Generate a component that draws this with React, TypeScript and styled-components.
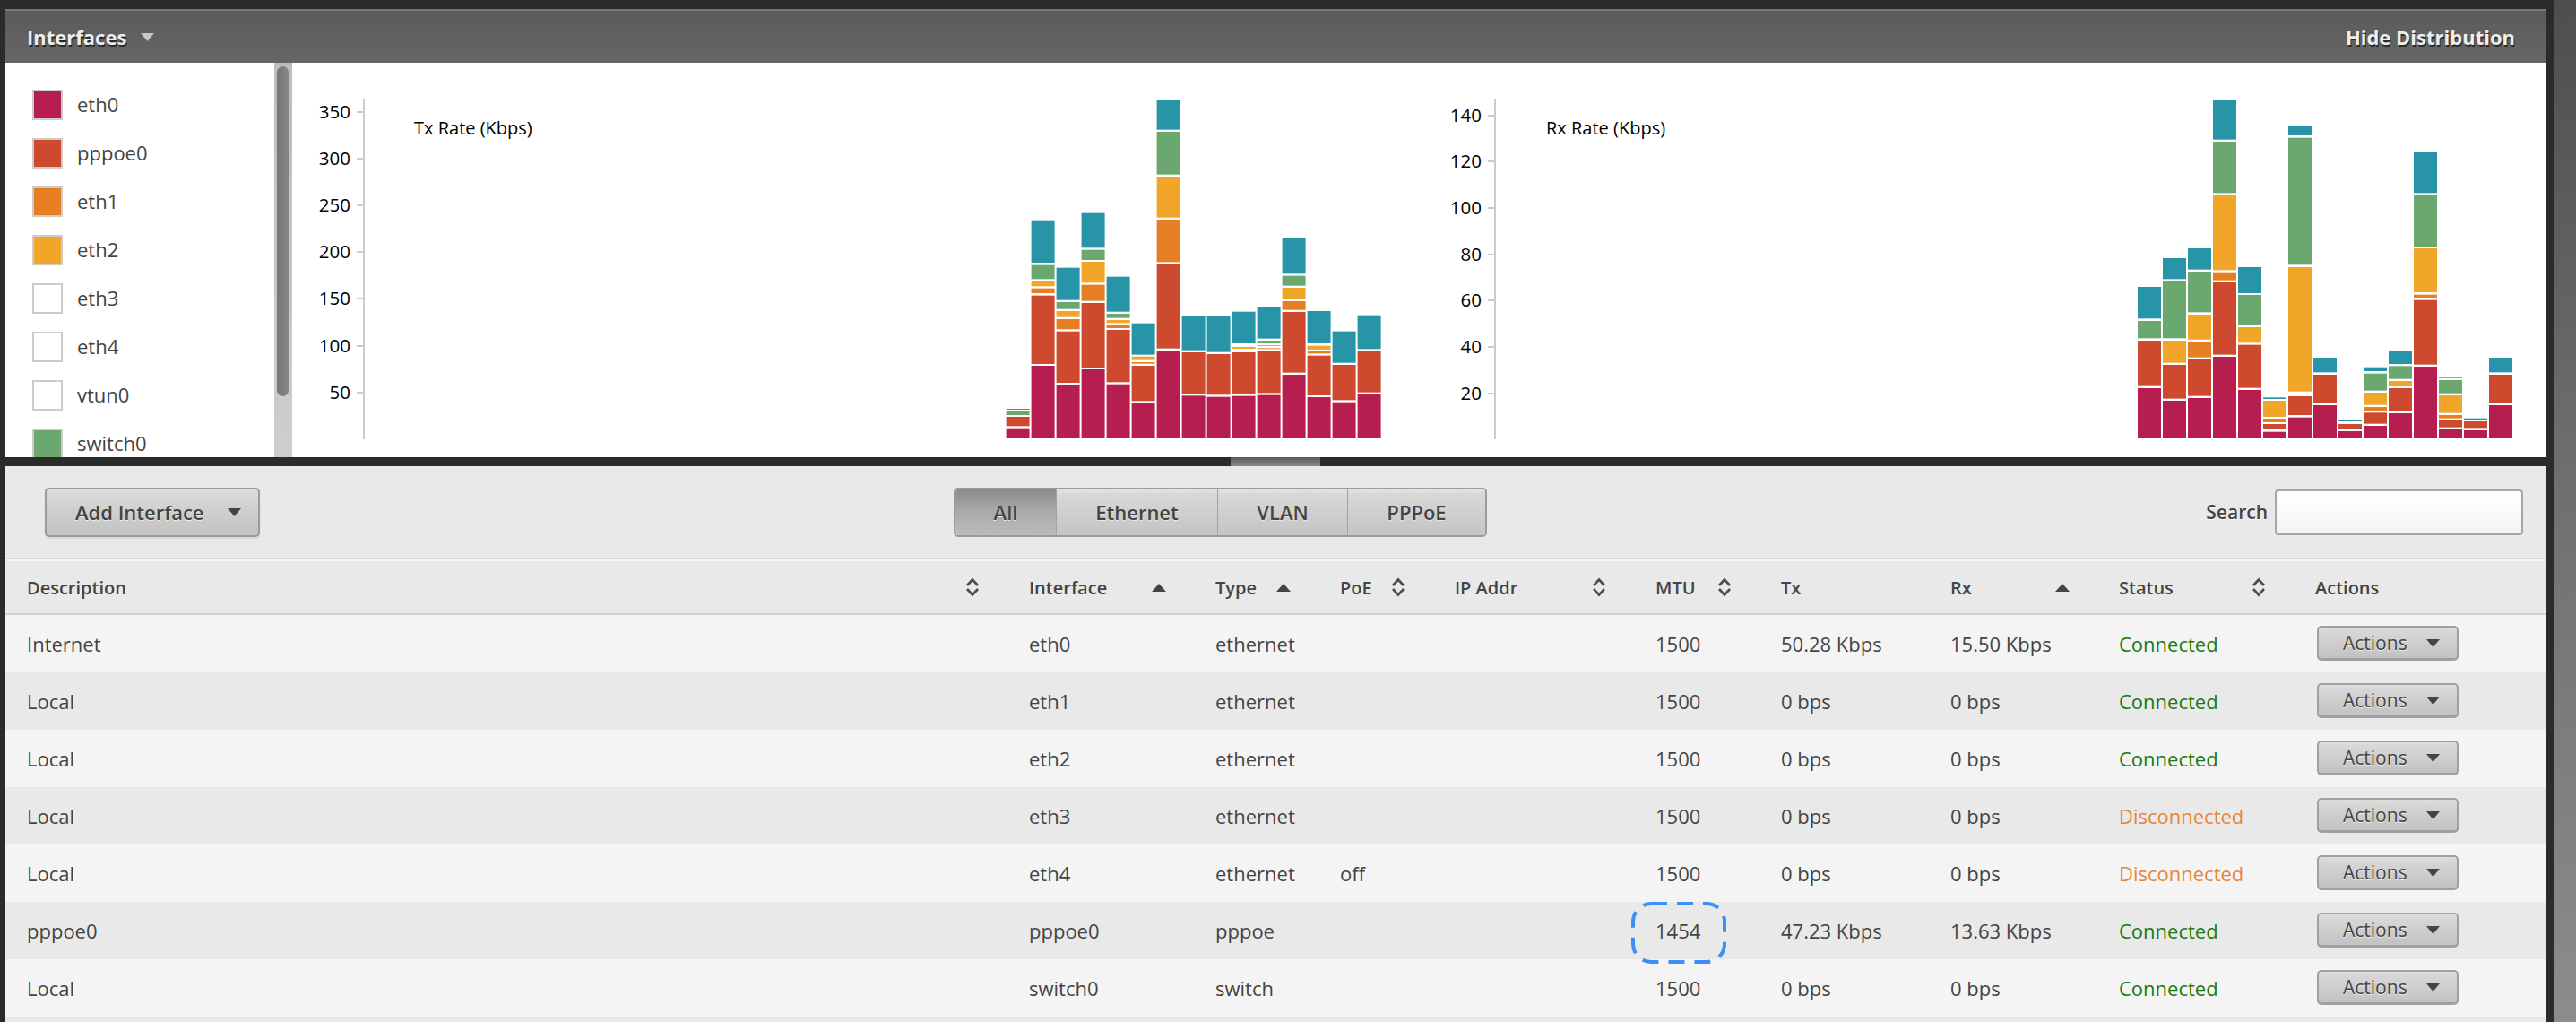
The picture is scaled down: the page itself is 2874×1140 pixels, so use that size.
import React from "react";
import styled, { createGlobalStyle } from "styled-components";

const GlobalStyle = createGlobalStyle`
  html, body { margin: 0; padding: 0; background: #2b2b2b; }
  body { font-family: "Open Sans", "Liberation Sans", sans-serif; }
  * { box-sizing: border-box; }
`;

const Page = styled.div`
  position: relative;
  display: flex;
  width: 2874px;
  height: 1140px;
  overflow: hidden;
  background: #2b2b2b;
`;
const Main = styled.div`
  flex: 1;
  min-width: 0;
  display: flex;
  flex-direction: column;
  gap: 10px;
  padding: 10px 10px 0 6px;
`;
const SideStrip = styled.div`
  width: 24px;
  background: linear-gradient(180deg, #4e4e4e 0%, #6e6e6e 45%, #8c8c8c 100%);
`;
const DistPanel = styled.section`
  height: 500px;
  flex: none;
  display: flex;
  flex-direction: column;
`;
const DistHeader = styled.header`
  height: 60px;
  flex: none;
  display: flex;
  align-items: center;
  justify-content: space-between;
  padding: 0 34px 0 24px;
  border-top: 2px solid #757575;
  background: linear-gradient(180deg, #5b5b5b, #666666);
  color: #eeeeee;
  font-size: 22px;
  font-weight: 700;
  text-shadow: 1px 2px 0 #2a2a2a;
`;
const HeaderTitle = styled.div`
  display: flex;
  align-items: center;
  gap: 16px;
`;
const DistBody = styled.div`
  flex: 1;
  min-height: 0;
  display: flex;
  background: #fff;
  overflow: hidden;
`;
const Legend = styled.div`
  width: 300px;
  flex: none;
  padding: 30px 0 0 30px;
  display: flex;
  flex-direction: column;
  gap: 20px;
  overflow: hidden;
`;
const LegendRow = styled.div`
  display: flex;
  align-items: center;
  gap: 16px;
  height: 34px;
  flex: none;
  color: #444;
  font-size: 22px;
`;
const LegendName = styled.span`
  margin-top: -3px;
`;
const Swatch = styled.span<{ $color?: string }>`
  width: 34px;
  height: 34px;
  border: 2px solid #cccccc;
  background: ${(p) => p.$color ?? "#fff"};
`;
const ScrollTrack = styled.div`
  width: 20px;
  flex: none;
  padding: 4px 4px 0 3px;
  background: linear-gradient(180deg, #bdbdbd, #cecece);
`;
const ScrollThumb = styled.div`
  height: 368px;
  border-radius: 7px;
  background: linear-gradient(90deg, #777, #868686);
`;
const Charts = styled.div`
  flex: 1;
  min-width: 0;
  display: flex;
`;
const ChartSvg = styled.svg<{ $w: number }>`
  display: block;
  width: ${(p) => p.$w}px;
  height: 440px;
  flex: none;
  font-family: "Open Sans", "Liberation Sans", sans-serif;
`;
const Handle = styled.div`
  position: absolute;
  left: 1373px;
  top: 510px;
  width: 100px;
  height: 10px;
  background: linear-gradient(180deg, #5a5a5a, #8a8a8a);
`;

const TablePanel = styled.section`
  flex: 1;
  min-height: 0;
  background: #e9e9e9;
  overflow: hidden;
  color: #444;
`;
const Toolbar = styled.div`
  height: 104px;
  display: grid;
  grid-template-columns: 1014px auto 1fr;
  align-items: center;
  padding: 0 25px 0 44px;
  border-bottom: 2px solid #d6d6d6;
`;
const ToolLeft = styled.div`
  display: flex;
`;
const ToolRight = styled.div`
  display: flex;
  justify-content: flex-end;
  align-items: center;
  gap: 8px;
  font-size: 21px;
  font-weight: 600;
  text-shadow: 0 1px 0 #fafafa;
`;
const AddButton = styled.button`
  width: 240px;
  height: 55px;
  display: flex;
  align-items: center;
  justify-content: space-between;
  padding: 0 19px 0 32px;
  border: 2px solid #9b9b9b;
  border-radius: 5px;
  background: linear-gradient(180deg, #e2e2e2 0%, #d8d8d8 10%, #c2c2c2 100%);
  box-shadow: 0 2px 2px rgba(0, 0, 0, 0.08);
  color: #444;
  font: 600 22px "Open Sans", sans-serif;
  text-shadow: 0 1px 0 #eee;
`;
const Segments = styled.div`
  display: flex;
  height: 55px;
  border: 2px solid #9b9b9b;
  border-radius: 5px;
  overflow: hidden;
`;
const Segment = styled.button<{ $w: number; $active?: boolean }>`
  width: ${(p) => p.$w}px;
  height: 100%;
  padding: 0;
  border: 0;
  border-right: 1px solid #a2a2a2;
  background: ${(p) =>
    p.$active
      ? "linear-gradient(180deg, #8c8c8c 0%, #a8a8a8 45%, #bcbcbc 100%)"
      : "linear-gradient(180deg, #e4e4e4 0%, #d8d8d8 10%, #c4c4c4 100%)"};
  color: #444;
  font: 600 22px "Open Sans", sans-serif;
  text-shadow: 0 1px 0 #e8e8e8;
  &:last-child { border-right: 0; }
`;
const SearchInput = styled.div`
  width: 277px;
  height: 51px;
  border: 2px solid #a6a6a6;
  border-radius: 4px;
  background: linear-gradient(180deg, #ffffff, #f3f3f3);
`;

const COLS = "1118px 208px 139px 128px 224px 140px 189px 188px 219px 1fr";

const HeadRow = styled.div`
  display: grid;
  grid-template-columns: ${COLS};
  align-items: center;
  height: 62px;
  padding-left: 24px;
  border-top: 2px solid #f4f4f4;
  border-bottom: 2px solid #d2d2d2;
  font-size: 20px;
  font-weight: 600;
`;
const HeadCell = styled.div`
  display: flex;
  align-items: center;
  justify-content: space-between;
  padding-right: 55px;
`;
const BodyRow = styled.div<{ $odd: boolean }>`
  display: grid;
  grid-template-columns: ${COLS};
  align-items: center;
  height: 64px;
  padding: 0 0 1px 24px;
  background: ${(p) => (p.$odd ? "#f4f4f4" : "#e9e9e9")};
  font-size: 22px;
`;
const Cell = styled.div`
  position: relative;
  white-space: nowrap;
`;
const Status = styled(Cell)<{ $on: boolean }>`
  color: ${(p) => (p.$on ? "#197a10" : "#e8843a")};
`;
const ActionButton = styled.button`
  width: 158px;
  height: 39px;
  margin-left: 2px;
  display: flex;
  align-items: center;
  justify-content: space-between;
  padding: 0 19px 0 27px;
  border: 2px solid #a0a0a0;
  border-bottom-width: 3px;
  border-radius: 5px;
  background: linear-gradient(180deg, #e0e0e0 0%, #d8d8d8 10%, #c2c2c2 100%);
  color: #444;
  font: 400 21px "Open Sans", sans-serif;
  text-shadow: 0 1px 0 #eee;
`;
const Callout = styled.svg`
  position: absolute;
  left: -27px;
  top: -17px;
  width: 106px;
  height: 69px;
  pointer-events: none;
`;

const Caret = ({ color = "#444" }: { color?: string }) => (
  <svg width={15} height={9} viewBox="0 0 15 9">
    <path d="M0 0H15L7.5 9Z" fill={color} />
  </svg>
);
const SortUp = () => (
  <svg width="16" height="9" viewBox="0 0 16 9">
    <path d="M8 0L16 9H0Z" fill="#444" />
  </svg>
);
const SortBoth = () => (
  <svg width="16" height="22" viewBox="0 0 16 22">
    <path d="M2 9L8 2.5L14 9M2 13L8 19.5L14 13" fill="none" stroke="#4d4d4d" strokeWidth="2.6" />
  </svg>
);

const COLORS: Record<string, string> = {
  c: "#b61e50",
  r: "#cd4a2e",
  o: "#e67e22",
  y: "#f1a629",
  g: "#6aa870",
  t: "#2794a8",
};

type Seg = [string, number, number];

const txBars: Seg[][] = [
  [["c", 1163, 1197], ["r", 1125, 1156], ["g", 1107, 1119], ["t", 1098, 1101]],
  [["c", 954, 1197], ["r", 719, 948], ["o", 695, 711], ["y", 671, 688], ["g", 617, 664], ["t", 467, 609]],
  [["c", 1017, 1197], ["r", 839, 1011], ["o", 798, 832], ["y", 771, 791], ["g", 741, 764], ["t", 626, 734]],
  [["c", 966, 1197], ["r", 744, 960], ["o", 683, 737], ["y", 606, 676], ["g", 566, 600], ["t", 443, 559]],
  [["c", 1016, 1197], ["r", 834, 1009], ["o", 818, 828], ["y", 801, 811], ["g", 780, 794], ["t", 656, 773]],
  [["c", 1079, 1197], ["r", 954, 1072], ["o", 942, 947], ["y", 923, 935], ["t", 812, 917]],
  [["c", 903, 1197], ["r", 615, 896], ["o", 465, 607], ["y", 321, 458], ["g", 171, 314], ["t", 63, 164]],
  [["c", 1054, 1197], ["r", 909, 1047], ["t", 788, 902]],
  [["c", 1058, 1197], ["r", 915, 1051], ["t", 788, 908]],
  [["c", 1055, 1197], ["r", 909, 1048], ["y", 891, 897], ["t", 773, 879]],
  [["c", 1052, 1197], ["r", 903, 1045], ["o", 895, 898], ["y", 885, 888], ["g", 870, 879], ["t", 758, 863]],
  [["c", 984, 1197], ["r", 774, 977], ["o", 738, 767], ["y", 693, 731], ["g", 653, 686], ["t", 527, 646]],
  [["c", 1059, 1197], ["r", 920, 1053], ["o", 906, 913], ["y", 887, 900], ["t", 771, 879]],
  [["c", 1076, 1197], ["r", 951, 1069], ["t", 839, 944]],
  [["c", 1050, 1197], ["r", 906, 1043], ["t", 785, 898]],
];

const rxBars: Seg[][] = [
  [["c", 1029, 1197], ["r", 870, 1022], ["g", 804, 862], ["t", 690, 796]],
  [["c", 1071, 1197], ["r", 951, 1064], ["y", 870, 944], ["g", 672, 862], ["t", 594, 664]],
  [["c", 1062, 1197], ["r", 933, 1055], ["o", 873, 926], ["y", 783, 866], ["g", 639, 775], ["t", 561, 632]],
  [["c", 924, 1197], ["r", 675, 917], ["o", 641, 668], ["y", 384, 634], ["g", 204, 376], ["t", 63, 197]],
  [["c", 1035, 1197], ["r", 884, 1028], ["y", 825, 877], ["g", 717, 818], ["t", 624, 711]],
  [["c", 1175, 1197], ["r", 1149, 1167], ["o", 1131, 1143], ["y", 1071, 1125], ["t", 1060, 1065]],
  [["c", 1127, 1197], ["r", 1056, 1119], ["o", 1047, 1050], ["y", 624, 1040], ["g", 191, 616], ["t", 150, 183]],
  [["c", 1086, 1197], ["r", 984, 1079], ["t", 927, 976]],
  [["c", 1173, 1197], ["r", 1149, 1167], ["t", 1136, 1140]],
  [["c", 1155, 1197], ["r", 1111, 1148], ["o", 1092, 1104], ["y", 1044, 1085], ["g", 980, 1037], ["t", 959, 972]],
  [["c", 1113, 1197], ["r", 1029, 1106], ["y", 1005, 1023], ["g", 955, 998], ["t", 906, 948]],
  [["c", 957, 1197], ["r", 734, 950], ["o", 716, 726], ["y", 561, 708], ["g", 384, 555], ["t", 240, 376]],
  [["c", 1167, 1197], ["r", 1137, 1160], ["o", 1119, 1130], ["y", 1053, 1112], ["g", 1002, 1046], ["t", 990, 995]],
  [["c", 1170, 1197], ["r", 1140, 1162], ["t", 1130, 1134]],
  [["c", 1086, 1197], ["r", 984, 1079], ["t", 927, 976]],
];

type ChartProps = {
  x0: number;
  w: number;
  axisX: number;
  ticks: [string, number][];
  title: string;
  titleX: number;
  bars: Seg[][];
  barX: number;
};

const Chart = ({ x0, w, axisX, ticks, title, titleX, bars, barX }: ChartProps) => (
  <ChartSvg $w={w} viewBox={`${x0} 70 ${w} 440`}>
    <rect x={axisX} y={110} width={2} height={380} fill="#cccccc" />
    {ticks.map(([label, y]) => (
      <g key={label}>
        <rect x={axisX - 7} y={y - 1} width={7} height={2} fill="#cccccc" />
        <text x={axisX - 14} y={y + 7} textAnchor="end" fontSize={20.5} fill="#000">
          {label}
        </text>
      </g>
    ))}
    <text x={titleX} y={150} fontSize={20} fill="#000">
      {title}
    </text>
    {bars.map((segs, i) =>
      segs.map(([c, top, bottom], j) => (
        <rect
          key={`${i}-${j}`}
          x={barX + i * 28}
          y={90 + top / 3}
          width={26}
          height={(bottom - top) / 3}
          fill={COLORS[c]}
        />
      ))
    )}
  </ChartSvg>
);

const legend: [string, string?][] = [
  ["eth0", COLORS.c],
  ["pppoe0", COLORS.r],
  ["eth1", COLORS.o],
  ["eth2", COLORS.y],
  ["eth3"],
  ["eth4"],
  ["vtun0"],
  ["switch0", COLORS.g],
];

const headers: [string, "both" | "up" | null][] = [
  ["Description", "both"],
  ["Interface", "up"],
  ["Type", "up"],
  ["PoE", "both"],
  ["IP Addr", "both"],
  ["MTU", "both"],
  ["Tx", null],
  ["Rx", "up"],
  ["Status", "both"],
  ["Actions", null],
];

type Row = { d: string; i: string; t: string; p?: string; m: string; tx: string; rx: string; on: boolean };
const rows: Row[] = [
  { d: "Internet", i: "eth0", t: "ethernet", m: "1500", tx: "50.28 Kbps", rx: "15.50 Kbps", on: true },
  { d: "Local", i: "eth1", t: "ethernet", m: "1500", tx: "0 bps", rx: "0 bps", on: true },
  { d: "Local", i: "eth2", t: "ethernet", m: "1500", tx: "0 bps", rx: "0 bps", on: true },
  { d: "Local", i: "eth3", t: "ethernet", m: "1500", tx: "0 bps", rx: "0 bps", on: false },
  { d: "Local", i: "eth4", t: "ethernet", p: "off", m: "1500", tx: "0 bps", rx: "0 bps", on: false },
  { d: "pppoe0", i: "pppoe0", t: "pppoe", m: "1454", tx: "47.23 Kbps", rx: "13.63 Kbps", on: true },
  { d: "Local", i: "switch0", t: "switch", m: "1500", tx: "0 bps", rx: "0 bps", on: true },
];

export default function App() {
  return (
    <Page>
      <GlobalStyle />
      <Main>
        <DistPanel>
          <DistHeader>
            <HeaderTitle>
              Interfaces
              <Caret color="#c8c8c8" />
            </HeaderTitle>
            <span>Hide Distribution</span>
          </DistHeader>
          <DistBody>
            <Legend>
              {legend.map(([name, color]) => (
                <LegendRow key={name}>
                  <Swatch $color={color} />
                  <LegendName>{name}</LegendName>
                </LegendRow>
              ))}
            </Legend>
            <ScrollTrack>
              <ScrollThumb />
            </ScrollTrack>
            <Charts>
              <Chart
                x0={326}
                w={1264}
                axisX={405}
                ticks={[["350", 125], ["300", 177], ["250", 229], ["200", 281], ["150", 333], ["100", 386], ["50", 438]]}
                title="Tx Rate (Kbps)"
                titleX={462}
                bars={txBars}
                barX={1122.6}
              />
              <Chart
                x0={1590}
                w={1250}
                axisX={1667}
                ticks={[["140", 129], ["120", 180], ["100", 232], ["80", 284], ["60", 335], ["40", 387], ["20", 439]]}
                title="Rx Rate (Kbps)"
                titleX={1725}
                bars={rxBars}
                barX={2385}
              />
            </Charts>
          </DistBody>
        </DistPanel>
        <TablePanel>
          <Toolbar>
            <ToolLeft>
              <AddButton>
                Add Interface
                <Caret />
              </AddButton>
            </ToolLeft>
            <Segments>
              <Segment $w={113} $active>All</Segment>
              <Segment $w={180}>Ethernet</Segment>
              <Segment $w={145}>VLAN</Segment>
              <Segment $w={153}>PPPoE</Segment>
            </Segments>
            <ToolRight>
              Search
              <SearchInput />
            </ToolRight>
          </Toolbar>
          <HeadRow>
            {headers.map(([label, sort]) => (
              <HeadCell key={label}>
                {label}
                {sort === "both" && <SortBoth />}
                {sort === "up" && <SortUp />}
              </HeadCell>
            ))}
          </HeadRow>
          {rows.map((r, idx) => (
            <BodyRow key={idx} $odd={idx % 2 === 0}>
              <Cell>{r.d}</Cell>
              <Cell>{r.i}</Cell>
              <Cell>{r.t}</Cell>
              <Cell>{r.p}</Cell>
              <Cell />
              <Cell>
                {r.m}
                {r.m === "1454" && (
                  <Callout viewBox="0 0 106 69">
                    <rect
                      x="2"
                      y="2"
                      width="102"
                      height="65"
                      rx="20"
                      fill="none"
                      stroke="#3d8ef5"
                      strokeWidth="4"
                      strokeDasharray="18 11"
                    />
                  </Callout>
                )}
              </Cell>
              <Cell>{r.tx}</Cell>
              <Cell>{r.rx}</Cell>
              <Status $on={r.on}>{r.on ? "Connected" : "Disconnected"}</Status>
              <Cell>
                <ActionButton>
                  Actions
                  <Caret />
                </ActionButton>
              </Cell>
            </BodyRow>
          ))}
        </TablePanel>
      </Main>
      <SideStrip />
      <Handle />
    </Page>
  );
}
